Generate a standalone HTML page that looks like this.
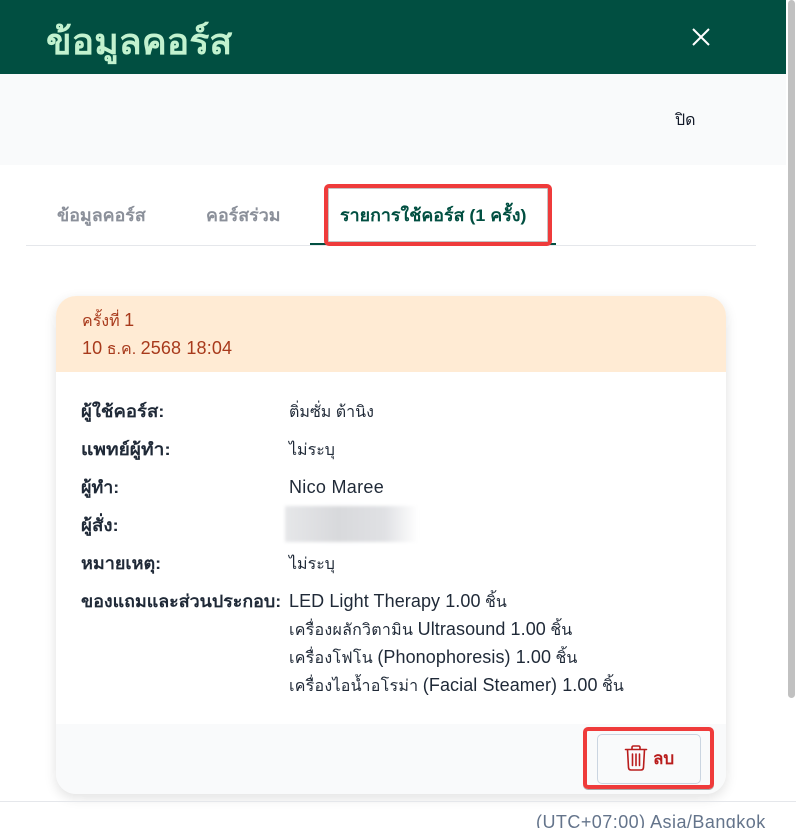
<!DOCTYPE html>
<html lang="th">
<head>
<meta charset="utf-8">
<style>
html,body{margin:0;padding:0;width:796px;height:828px;overflow:hidden;background:#fff;font-family:"Liberation Sans","DejaVu Sans",sans-serif;}
.a{position:absolute;white-space:nowrap;}
#root{position:relative;width:796px;height:828px;overflow:hidden;}
.lab{left:81px;font-size:17px;font-weight:700;color:#1f2937;line-height:28px;transform:scaleX(1.05);transform-origin:0 50%;}
.val{left:289px;font-size:16px;color:#1f2937;line-height:28px;}
.tab{font-size:17px;line-height:28px;font-weight:700;transform:scaleX(1.05);transform-origin:0 50%;}
.l{font-size:18px;letter-spacing:.08px;}
.t{letter-spacing:.25px;}
</style>
</head>
<body>
<div id="root">
<div class="a" style="left:0;top:0;width:786px;height:74px;background:#014f41"></div>
<div class="a" style="left:46px;top:17px;font-size:36px;line-height:50px;font-weight:700;color:#c2f2cf;transform:scaleX(1.04);transform-origin:0 50%">ข้อมูลคอร์ส</div>
<svg class="a" style="left:691px;top:27px" width="20" height="20" viewBox="0 0 20 20"><path d="M2 2L18 18M18 2L2 18" stroke="#fff" stroke-width="2" fill="none"/></svg>
<div class="a" style="left:0;top:74px;width:786px;height:91px;background:#f9fafb"></div>
<div class="a" style="left:675px;top:107px;font-size:16px;line-height:28px;color:#111827">ปิด</div>
<div class="a" style="left:788px;top:0;width:7px;height:698px;background:#c1c1c1;border-radius:4px"></div>

<div class="a" style="left:26px;top:245px;width:730px;height:1px;background:#e5e7eb"></div>
<div class="a tab" style="left:57px;top:202px;color:#8b909a">ข้อมูลคอร์ส</div>
<div class="a tab" style="left:206px;top:202px;color:#8b909a">คอร์สร่วม</div>
<div class="a" style="left:310px;top:243px;width:246px;height:2px;background:#014f41"></div>
<div class="a tab" style="left:340px;top:202px;color:#014f41">รายการใช้คอร์ส (1 ครั้ง)</div>
<div class="a" style="left:324px;top:184px;width:228px;height:62px;box-sizing:border-box;border:4px solid #ef3b3b;border-radius:5px;box-shadow:inset 0 0 0 1px rgba(90,90,90,.35)"></div>

<div class="a" style="left:56px;top:296px;width:670px;height:498px;border-radius:20px;background:#fff;box-shadow:0 4px 12px rgba(0,0,0,.12);overflow:hidden">
  <div class="a" style="left:0;top:0;width:670px;height:76px;background:#ffebd4"></div>
  <div class="a" style="left:0;top:428px;width:670px;height:70px;background:#f9fafb"></div>
  <div class="a" style="left:26px;top:10px;font-size:16px;line-height:28px;color:#a83a1c">ครั้งที่ <span class="l">1</span></div>
  <div class="a" style="left:26px;top:38px;font-size:16px;line-height:28px;color:#a83a1c"><span class="l" style="letter-spacing:.15px">10</span> ธ.ค. <span class="l" style="letter-spacing:.15px">2568 18:04</span></div>
</div>

<div class="a lab" style="top:398px;transform:scaleX(1.09)">ผู้ใช้คอร์ส:</div>
<div class="a val" style="top:399px">ติ่มซั่ม ต้านิง</div>
<div class="a lab" style="top:436px;transform:scaleX(1.126)">แพทย์ผู้ทำ:</div>
<div class="a val" style="top:437px">ไม่ระบุ</div>
<div class="a lab" style="top:474px">ผู้ทำ:</div>
<div class="a val" style="top:473px;font-size:18px;letter-spacing:.3px">Nico Maree</div>
<div class="a lab" style="top:512px;transform:scaleX(1.1)">ผู้สั่ง:</div>
<div class="a" style="left:285px;top:506px;width:133px;height:36px;background:linear-gradient(90deg,#e6e7e9 0%,#d8d9dc 40%,#e0e1e4 75%,#fff 100%);filter:blur(1.5px)"></div>
<div class="a lab" style="top:550px;transform:scaleX(1.06)">หมายเหตุ:</div>
<div class="a val" style="top:551px">ไม่ระบุ</div>
<div class="a lab" style="top:588px">ของแถมและส่วนประกอบ:</div>
<div class="a val" style="top:587px"><span class="l">LED Light Therapy 1.00</span> ชิ้น</div>
<div class="a val" style="top:615px"><span class="t">เครื่องผลักวิตามิน</span> <span class="l">Ultrasound 1.00</span> ชิ้น</div>
<div class="a val" style="top:643px"><span class="t">เครื่องโฟโน</span> <span class="l">(Phonophoresis) 1.00</span> ชิ้น</div>
<div class="a val" style="top:671px"><span class="t">เครื่องไอน้ำอโรม่า</span> <span class="l">(Facial Steamer) 1.00</span> ชิ้น</div>

<div class="a" style="left:597px;top:734px;width:104px;height:50px;box-sizing:border-box;border:1px solid #cbd5e1;border-radius:5px;background:#f9fafb"></div>
<svg class="a" style="left:624px;top:744px" width="24" height="28" viewBox="0 0 24 28" fill="none" stroke="#b91c1c" stroke-width="1.6" stroke-linecap="round" stroke-linejoin="round"><path d="M1.5 5.5H22.500M8 5.500V3.500Q8 2 9.500 2H14.500Q16 2 16 3.500V5.500M3.500 5.500L4.500 23.500Q4.700 26 7 26H17Q19.300 26 19.500 23.500L20.500 5.500M8.500 10V21.500M12 10V21.500M15.500 10V21.500"/></svg>
<div class="a" style="left:653px;top:745px;font-size:17px;line-height:28px;font-weight:700;color:#b91c1c">ลบ</div>
<div class="a" style="left:583px;top:727px;width:131px;height:62px;box-sizing:border-box;border:4px solid #ef3b3b;border-radius:5px;box-shadow:0 1px 0 rgba(90,90,90,.5)"></div>

<div class="a" style="left:0;top:801px;width:796px;height:1px;background:#e5e7eb"></div>
<div class="a" style="left:536px;top:809px;font-size:18px;letter-spacing:.46px;line-height:26px;color:#64748b">(UTC+07:00) Asia/Bangkok</div>
</div>
</body>
</html>
